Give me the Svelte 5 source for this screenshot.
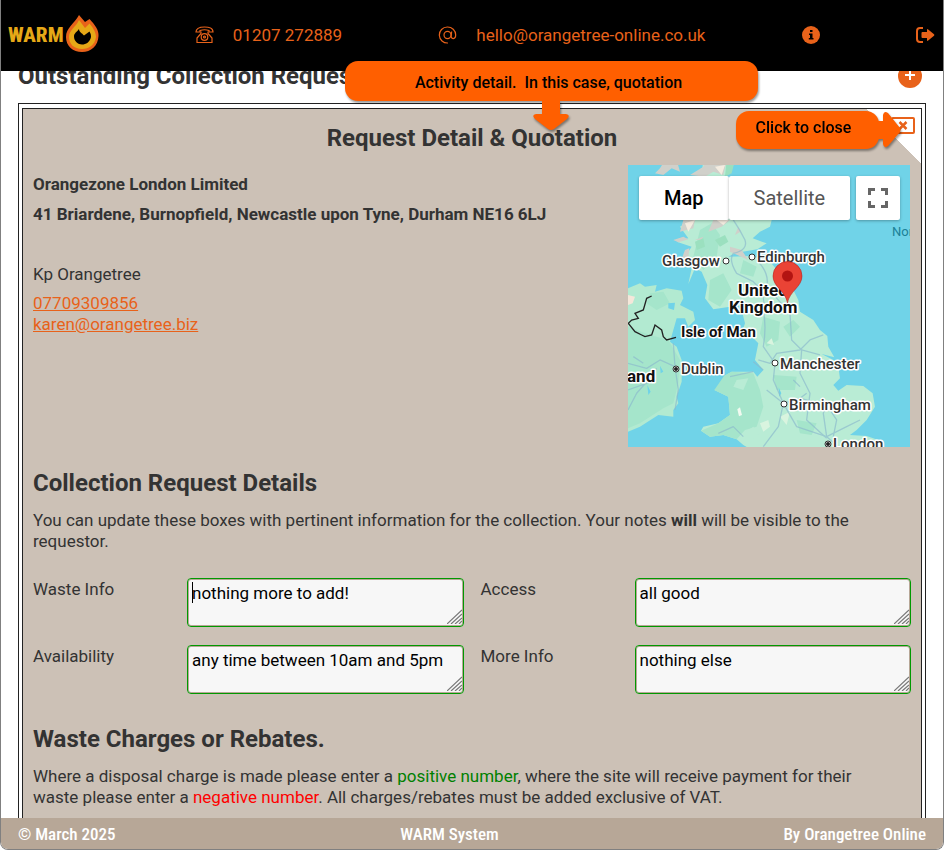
<script>
    let phone = "01207 272889";
    let email = "hello@orangetree-online.co.uk";

    let customer = {
        name: "Orangezone London Limited",
        address: "41 Briardene, Burnopfield, Newcastle upon Tyne, Durham NE16 6LJ",
        contact: "Kp Orangetree",
        phone: "07709309856",
        email: "karen@orangetree.biz"
    };

    let fields = [
        { id: "waste", label: "Waste Info", value: "nothing more to add!", active: true },
        { id: "access", label: "Access", value: "all good" },
        { id: "availability", label: "Availability", value: "any time between 10am and 5pm" },
        { id: "more", label: "More Info", value: "nothing else" }
    ];

    // labels on the map, x/y is the text baseline
    let places = [
        { name: "Glasgow", x: 34, y: 101, dotX: 98, dotY: 96 },
        { name: "Edinburgh", x: 129, y: 97, dotX: 124, dotY: 92 },
        { name: "Manchester", x: 152, y: 204, dotX: 147, dotY: 198 },
        { name: "Birmingham", x: 161, y: 245, dotX: 156, dotY: 239 },
        { name: "Dublin", x: 53, y: 209, dotX: 48, dotY: 204, capital: true },
        { name: "London", x: 205, y: 284, dotX: 200, dotY: 279, capital: true }
    ];
    let regions = [
        { name: "United", x: 110, y: 131 },
        { name: "Kingdom", x: 101, y: 148 },
        { name: "Isle of Man", x: 53, y: 172, small: true },
        { name: "and", x: -1, y: 217 }
    ];
</script>

<div class="app">
    <header>
        <a class="logo" href="#home" aria-label="WARM home">
            <span>WARM</span>
            <svg width="33" height="37" viewBox="0 0 33 37">
                <path fill="#e8621a" d="M13 0 19 7 23.500 4C29 10 33 15 32.500 21 32 31 25 37 16 37 7 37 0 31 0 22 0 13 8 9 13 0Z" />
                <path fill="#e6a817" d="M13 5 19 13 23.500 8.500C28 14 30 18 30 22 29 30 23 34 16 34 8 34 3 29 3 22 3 15 10 12 13 5Z" />
                <path fill="#000" d="M13 14C13 17 16 18 18 20.500L23.500 16.500C25 19 25 20 25 22 24 27 20 29.500 16 29.500 12 29.500 8 26 8 21.500 8 18 11 17 13 14Z" />
            </svg>
        </a>
        <a class="item" href="tel:01207272889">
            <svg width="19" height="18" viewBox="0 0 19 18" fill="none" stroke="currentColor" stroke-width="1.2">
                <path d="M1 6C1 2 5 1 9.500 1S18 2 18 6H14V4.500Q9.500 3 5 4.500V6Z" />
                <path d="M6 5.500V7.500L2 12V16.500H17V12L13 7.500V5.500" />
                <circle cx="9.500" cy="11" r="3.300" />
                <circle cx="9.500" cy="11" r="1" />
            </svg>
            <span>{phone}</span>
        </a>
        <a class="item" href="mailto:{email}">
            <svg width="19" height="18" viewBox="0 0 19 18" fill="none" stroke="currentColor" stroke-width="1.2">
                <path d="M10 17A8.200 8 0 1 1 17.700 9C17.700 14 13 13 13.200 10.500L13.600 5.500" />
                <ellipse cx="9.500" cy="9" rx="3.500" ry="3.600" />
            </svg>
            <span>{email}</span>
        </a>
        <button class="icon" aria-label="Information">
            <svg width="18" height="18" viewBox="0 0 18 18">
                <circle cx="9" cy="9" r="9" fill="currentColor" />
                <path fill="#000" d="M8 4h2.500v2H8zM7 7.500h3.500V12H11.500v1.500H6.800V12H8V9H7z" />
            </svg>
        </button>
        <button class="icon" aria-label="Log out">
            <svg width="19" height="16" viewBox="0 0 19 16">
                <path d="M7 1H4Q1 1 1 4V12Q1 15 4 15H7" fill="none" stroke="currentColor" stroke-width="2" />
                <path d="M5.500 6Q5.500 5 6.500 5H11V3Q11 1.500 12.200 2.500L18 7.200Q18.800 8 18 8.800L12.200 13.500Q11 14.500 11 13V11H6.500Q5.500 11 5.500 10Z" fill="currentColor" />
            </svg>
        </button>
    </header>

    <main>
        <div class="bar">
            <h2>Outstanding Collection Requests</h2>
            <button class="icon" aria-label="Add request">
                <svg width="24" height="24" viewBox="0 0 24 24">
                    <circle cx="12" cy="12" r="12" fill="currentColor" />
                    <path d="M12 6V16M7 11H17" stroke="#fff" stroke-width="2" />
                </svg>
            </button>
        </div>

        <div class="frame">
            <section class="panel">
                <div class="corner">
                    <button class="icon" aria-label="Close">
                        <svg width="24" height="17" viewBox="0 0 24 17" fill="none" stroke="currentColor" stroke-width="2">
                            <rect x="1" y="1" width="22" height="15" rx="1" />
                            <path d="M8.500 5 15.500 12M15.500 5 8.500 12" stroke-width="2.500" />
                        </svg>
                    </button>
                </div>

                <h2 class="title">Request Detail &amp; Quotation</h2>

                <div class="detail">
                    <div class="customer">
                        <p><b>{customer.name}</b></p>
                        <p><b>{customer.address}</b></p>
                        <p class="contact">{customer.contact}</p>
                        <a href="tel:{customer.phone}">{customer.phone}</a>
                        <a href="mailto:{customer.email}">{customer.email}</a>
                    </div>

                    <div class="map">
                        <svg viewBox="0 0 282 282">
                            <rect width="282" height="282" fill="#70d3e8" />
                            <g transform="translate(-8 -5) scale(0.3333)">
                                <path fill="#b9ecd5" d="M250 0 345 0 335 30 310 50 400 120 455 180 450 200 420 215 398 235 440 250 412 268 350 278 325 290 395 288 450 305 480 340 515 380 535 420 540 455 580 480 600 510 622 528 625 560 643 592 605 582 640 600 655 620 660 655 640 675 655 692 680 675 730 678 758 700 765 740 740 780 710 810 690 825 740 828 790 845 790 870 395 870 370 855 350 838 310 825 270 830 243 812 250 800 295 790 330 765 325 710 283 690 310 675 312 648 335 635 400 635 412 650 430 630 405 600 415 550 400 535 365 520 375 490 365 450 400 430 330 440 280 448 255 415 262 375 245 335 225 325 205 372 215 325 195 300 185 305 215 260 170 245 205 235 180 200 230 170Z" />
                                <path fill="#a5e5cb" d="M240 210 275 190 300 225 290 290 250 330 220 290ZM270 360 310 340 335 390 300 440 265 420ZM430 470 480 485 475 540 440 560 420 520ZM312 648 335 635 400 640 420 690 430 740 410 800 375 810 350 838 310 825 270 830 243 812 295 790 330 765 325 710 283 690ZM460 645 530 650 525 690 470 690ZM530 780 590 790 575 825 540 820ZM370 300 410 320 400 350 360 340ZM490 500 520 480 540 500 510 530Z" />
                                <path fill="#d9f4df" d="M440 550 455 535 462 555ZM420 790 445 780 450 800 430 815ZM480 770 510 755 500 795Z" />
                                <path fill="#b9ecd5" d="M350 660 385 655 370 690 340 680ZM370 820 400 800 420 820 395 840Z" />
                                <path fill="#f1faf0" d="M352 748 360 742 366 765 357 769Z" />
                                <path fill="#d0d0ca" d="M105 40 120 25 135 0 170 0 180 35 155 25 130 45ZM210 45 250 20 255 0 320 0 310 45 280 35 255 50ZM190 180 225 180 220 205 180 215ZM280 180 330 180 305 200 265 215ZM160 240 190 230 205 238 175 247ZM180 310 195 270 208 265 205 295ZM330 260 365 270 385 300 330 275ZM225 240 250 230 245 240ZM355 200 345 225 362 215Z" />
                                <path fill="#f4ece0" d="M285 20 315 15 305 45ZM195 190 225 180 205 215ZM290 180 325 180 310 195ZM155 0 170 0 165 15Z" />
                                <path fill="#9be0bf" d="M320 0 345 0 335 40 315 50ZM225 245 250 235 255 260 230 270ZM285 240 315 225 325 245 300 260Z" />
                                <path fill="#b2ead1" d="M24 385 60 370 75 380 110 375 105 395 140 385 185 392 190 415 180 435 220 455 225 480 205 500 195 475 170 475 150 545 170 560 185 600 185 665 170 710 175 730 160 750 160 770 115 765 60 800 24 815Z" />
                                <path fill="#a5e5cb" d="M24 500 90 525 145 540 180 600 175 670 160 730 130 745 60 790 24 805ZM90 400 130 395 150 430 110 450 80 430Z" />
                                <path fill="#f5e7da" d="M24 405 45 410 38 430 24 435Z" />
                                <path fill="#70d3e8" d="M145 430 165 428 162 450 145 445ZM120 617 130 635 122 640ZM82 675 92 695 85 705ZM476 682 484 700 478 710Z" />
                                <g fill="none" stroke="#8bb9cd" stroke-width="4" stroke-linejoin="round" opacity=".65">
                                    <path d="M340 180Q360 210 375 240 385 270 340 280 325 300 350 340L400 365Q440 400 430 450 440 500 430 560L465 610 460 660 490 730 530 800 620 830 650 855" />
                                    <path d="M410 300Q450 340 440 380L510 460 515 540 545 570 540 640 570 700 560 780 620 835" />
                                    <path d="M415 600 450 610 470 580 540 570 570 540 610 525M545 570 600 585M430 630 400 605M330 650 400 635M440 690 490 730 540 715 560 700M620 830 610 760 620 735 650 780 640 830M540 715 640 740M620 830 680 800 720 780M490 730 475 800 430 860M295 820 340 800 370 830M520 660 540 680" />
                                    <path d="M24 610 80 625 120 600 165 620M24 690 80 670 110 625M165 620 175 690 165 750M24 750 50 700 85 660M70 610 40 590M165 620 160 550" />
                                </g>
                                <path fill="none" stroke="#222" stroke-width="4" d="M95 408 80 415 70 450 45 460 55 475 35 480 25 490 45 515 65 525 75 530 95 525 105 495 125 510 130 530 140 540 168 532" />
                            </g>

                            {#each places as place}
                                <circle cx={place.dotX} cy={place.dotY} r="3" fill="#fff" stroke="#333" />
                                {#if place.capital}
                                    <circle cx={place.dotX} cy={place.dotY} r="2" fill="#222" />
                                {/if}
                                <text class="place" x={place.x} y={place.y}>{place.name}</text>
                            {/each}
                            {#each regions as region}
                                <text class="region" class:small={region.small} x={region.x} y={region.y}>{region.name}</text>
                            {/each}
                            <text class="sea" x="264" y="71">North Sea</text>

                            <path fill="#ea4335" stroke="#b31412" stroke-width="0.500" d="M159.500 138C157.500 126 145 122 145 111A14.500 14.500 0 0 1 174 111C174 122 161.500 126 159.500 138Z" />
                            <circle cx="159.500" cy="111" r="5.500" fill="#b31412" />
                        </svg>
                        <div class="controls">
                            <div class="types">
                                <button class="on">Map</button>
                                <button>Satellite</button>
                            </div>
                            <button class="full" aria-label="Toggle fullscreen view">
                                <svg width="20" height="20" viewBox="0 0 20 20" fill="none" stroke="#666" stroke-width="3">
                                    <path d="M1.500 7V1.500H7M13 1.500H18.500V7M18.500 13V18.500H13M7 18.500H1.500V13" />
                                </svg>
                            </button>
                        </div>
                    </div>
                </div>

                <h2>Collection Request Details</h2>
                <p class="intro">You can update these boxes with pertinent information for the collection. Your notes <b>will</b> will be visible to the requestor.</p>

                <div class="fields">
                    {#each fields as field}
                        <div class="field">
                            <label for={field.id}>{field.label}</label>
                            <div class="box" class:active={field.active}>
                                <textarea id={field.id} rows="2" bind:value={field.value}></textarea>
                                <svg class="grip" width="15" height="15" viewBox="0 0 15 15" stroke="#777" stroke-width="1.2">
                                    <path d="M0 15 15 1M4 15 15 5M8 15 15 9M12 15 15 12" />
                                </svg>
                            </div>
                        </div>
                    {/each}
                </div>

                <h2>Waste Charges or Rebates.</h2>
                <p class="intro">Where a disposal charge is made please enter a <span class="positive">positive number</span>, where the site will receive payment for their waste please enter a <span class="negative">negative number</span>. All charges/rebates must be added exclusive of VAT.</p>
            </section>
        </div>
    </main>

    <footer>
        <span>© March 2025</span>
        <span>WARM System</span>
        <span>By Orangetree Online</span>
    </footer>

    <!-- help callouts, these lie over the page -->
    <div class="callout detail-tip">
        Activity detail.&nbsp; In this case, quotation
        <svg width="38" height="31" viewBox="0 0 38 31">
            <path d="M10 0H28V14H34Q39 15 35 19L22 29Q19 31 16 29L3 19Q-1 15 4 14H10Z" />
        </svg>
    </div>
    <div class="callout close-tip">
        Click to close
        <svg width="26" height="38" viewBox="0 0 26 38">
            <path d="M0 10H8V4Q9-1 13 2L25 17Q26 19 25 21L13 35Q9 38 8 33V28H0Z" />
        </svg>
    </div>
</div>

<style>
    :global(body) {
        margin: 0;
    }

    .app {
        position: relative;
        box-sizing: border-box;
        height: 100vh;
        overflow: hidden;
        border: solid #808080;
        border-width: 0 1px 1px;
        border-radius: 0 0 8px 8px;
        background: #fff;
        color: #333;
        font-family: Roboto, sans-serif;
        font-size: 17px;
        line-height: 21px;
    }

    header {
        position: absolute;
        z-index: 2;
        top: 0;
        left: 0;
        right: 0;
        box-sizing: border-box;
        height: 71px;
        padding: 0 8px 1px 7px;
        display: flex;
        align-items: center;
        justify-content: space-between;
        background: #000;
    }

    a {
        color: #e8621a;
    }

    .logo {
        display: flex;
        align-items: center;
        gap: 2px;
        color: #e6a817;
        font-family: "Roboto Condensed", Roboto, sans-serif;
        font-size: 21px;
        font-weight: 800;
        text-decoration: none;
    }

    .logo svg {
        margin-bottom: 3px;
    }

    .item {
        display: flex;
        align-items: center;
        gap: 19px;
        text-decoration: none;
    }

    button {
        margin: 0;
        padding: 0;
        border: 0;
        background: none;
        font: inherit;
        cursor: pointer;
    }

    .icon {
        display: flex;
        color: #e8621a;
    }

    main {
        padding: 63px 17px 0;
    }

    .bar {
        display: flex;
        justify-content: space-between;
        align-items: center;
        padding-right: 4px;
        margin-bottom: 14px;
    }

    h2 {
        margin: 0;
        font-size: 24px;
        line-height: 26px;
        font-weight: 700;
    }

    .frame {
        border: 1px solid #222;
        padding: 4px 3px;
    }

    .panel {
        position: relative;
        border: 1px solid #222;
        padding: 16px 10px 60px;
        background: #ccc1b6;
    }

    .corner {
        position: absolute;
        top: 0;
        right: 0;
        width: 54px;
        height: 54px;
        background: linear-gradient(45deg, transparent 50%, #fff 50%);
    }

    .corner .icon {
        position: absolute;
        top: 8px;
        right: 6px;
    }

    .title {
        margin-bottom: 14px;
        text-align: center;
    }

    .detail {
        display: flex;
        justify-content: space-between;
        margin-bottom: 23px;
        padding-right: 1px;
    }

    p {
        margin: 0;
    }

    .intro {
        padding-right: 16px;
    }

    .customer {
        padding-top: 9px;
    }

    .customer p {
        margin-bottom: 9px;
    }

    .customer .contact {
        margin-top: 39px;
        margin-bottom: 8px;
    }

    .customer a {
        display: block;
        width: fit-content;
    }

    .map {
        position: relative;
        flex: none;
        width: 282px;
        height: 282px;
    }

    .map > svg {
        display: block;
        width: 100%;
    }

    .map text {
        paint-order: stroke;
        stroke: #fff;
        stroke-width: 3px;
        stroke-linejoin: round;
    }

    .place {
        font-size: 15px;
        font-weight: 500;
        fill: #333;
    }

    .region {
        font-size: 17px;
        font-weight: 700;
        fill: #111;
    }

    .region.small {
        font-size: 15px;
    }

    .map .sea {
        font-size: 13px;
        fill: #1c8197;
        stroke: none;
    }

    .controls {
        position: absolute;
        top: 11px;
        left: 11px;
        right: 10px;
        display: flex;
        justify-content: space-between;
    }

    .types {
        display: flex;
    }

    .controls button {
        height: 44px;
        background: #fff;
        border-radius: 2px;
        box-shadow: 0 1px 3px rgba(0, 0, 0, 0.3);
    }

    .types button {
        padding: 0 25px;
        color: #565656;
        font-size: 20px;
    }

    .types .on {
        color: #000;
        font-weight: 500;
    }

    .controls .full {
        display: flex;
        align-items: center;
        justify-content: center;
        width: 44px;
    }

    .panel h2:not(.title) {
        margin-bottom: 14px;
    }

    .fields {
        display: grid;
        grid-template-columns: 1fr 1fr;
        gap: 18px 17px;
        margin: 26px 0 32px;
    }

    .field {
        display: flex;
    }

    .field label {
        width: 154px;
        padding-top: 1px;
    }

    .box {
        position: relative;
        flex: 1;
    }

    /* text cursor in the field being edited */
    .active::before {
        content: "";
        position: absolute;
        top: 4px;
        left: 5px;
        width: 1px;
        height: 21px;
        background: #000;
    }

    .grip {
        position: absolute;
        right: 2px;
        bottom: 3px;
        pointer-events: none;
    }

    textarea {
        display: block;
        box-sizing: border-box;
        width: 100%;
        height: 49px;
        padding: 4px;
        border: 1px solid #090;
        border-radius: 4px;
        outline: none;
        background: #f7f7f7;
        box-shadow: inset 0 0 0 1px #b7a797;
        color: #000;
        font: inherit;
        overflow: hidden;
        resize: vertical;
    }

    textarea::-webkit-resizer {
        background: transparent;
    }

    .positive {
        color: green;
    }

    .negative {
        color: red;
    }

    footer {
        position: absolute;
        left: 0;
        right: 0;
        bottom: 0;
        display: flex;
        justify-content: space-between;
        padding: 6px 17px 4px;
        background: #b7a797;
        color: #fff;
        font-family: "Roboto Condensed", Roboto, sans-serif;
        font-weight: 500;
    }

    .callout {
        position: absolute;
        z-index: 3;
        box-sizing: border-box;
        border-radius: 13px;
        background: #ff5f00;
        color: #000;
        font-size: 16px;
        font-weight: 500;
        text-align: center;
        filter: drop-shadow(1px 2px 1px rgba(0, 0, 0, 0.4));
    }

    .callout svg {
        position: absolute;
        fill: #ff5f00;
    }

    .detail-tip {
        top: 61px;
        left: 344px;
        width: 413px;
        padding: 11px 6px 8px 0;
    }

    .detail-tip svg {
        top: 39px;
        left: 187px;
    }

    .close-tip {
        top: 111px;
        right: 64px;
        width: 143px;
        padding: 6px 8px 11px 0;
    }

    .close-tip svg {
        top: 0;
        left: 139px;
    }
</style>
